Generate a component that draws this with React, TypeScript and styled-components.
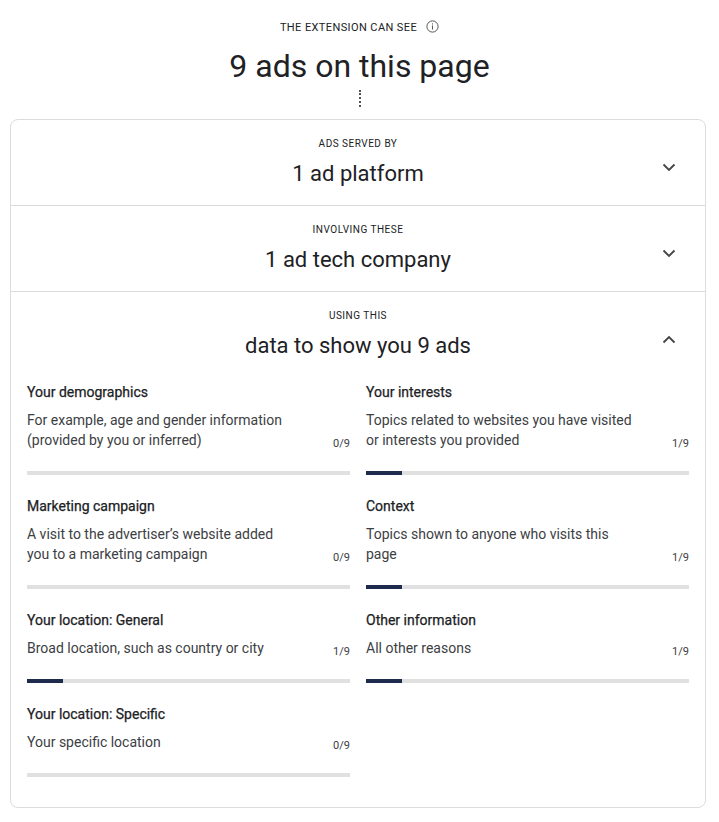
import React from 'react';
import styled, { createGlobalStyle } from 'styled-components';

const Global = createGlobalStyle`
  body { margin: 0; font-family: Roboto, "Liberation Sans", sans-serif; color: #202124; background: #fff; }
`;

type Item = { title: string; desc: string; count: number };

const items: Item[] = [
  { title: 'Your demographics', desc: 'For example, age and gender information (provided by you or inferred)', count: 0 },
  { title: 'Your interests', desc: 'Topics related to websites you have visited or interests you provided', count: 1 },
  { title: 'Marketing campaign', desc: 'A visit to the advertiser’s website added you to a marketing campaign', count: 0 },
  { title: 'Context', desc: 'Topics shown to anyone who visits this page', count: 1 },
  { title: 'Your location: General', desc: 'Broad location, such as country or city', count: 1 },
  { title: 'Other information', desc: 'All other reasons', count: 1 },
  { title: 'Your location: Specific', desc: 'Your specific location', count: 0 },
];

const Chevron = ({ up }: { up?: boolean }) => (
  <svg width="14" height="9" viewBox="0 0 14 9">
    <path d={up ? 'M1.5 7.5 L7 2 L12.5 7.5' : 'M1.5 1.5 L7 7 L12.5 1.5'} fill="none" stroke="#444" strokeWidth="1.8" />
  </svg>
);

const App = () => (
  <Page>
    <Global />
    <Head>
      <Eyebrow>
        THE EXTENSION CAN SEE
        <svg width="13" height="13" viewBox="0 0 13 13">
          <circle cx="6.5" cy="6.5" r="5.6" fill="none" stroke="#555" strokeWidth="1" />
          <rect x="6" y="5.5" width="1" height="4" fill="#555" />
          <rect x="6" y="3.4" width="1" height="1.1" fill="#555" />
        </svg>
      </Eyebrow>
      <BigTitle>9 ads on this page</BigTitle>
      <Dots />
    </Head>
    <Card>
      <Section>
        <SectionHead>
          <Label>ADS SERVED BY</Label>
          <SectionTitle>1 ad platform</SectionTitle>
          <Toggle><Chevron /></Toggle>
        </SectionHead>
      </Section>
      <Section>
        <SectionHead>
          <Label>INVOLVING THESE</Label>
          <SectionTitle>1 ad tech company</SectionTitle>
          <Toggle><Chevron /></Toggle>
        </SectionHead>
      </Section>
      <Section>
        <SectionHead>
          <Label>USING THIS</Label>
          <SectionTitle>data to show you 9 ads</SectionTitle>
          <Toggle><Chevron up /></Toggle>
        </SectionHead>
        <Grid>
          {items.map((it) => (
            <Cell key={it.title}>
              <CellTitle>{it.title}</CellTitle>
              <DescRow>
                <Desc>{it.desc}</Desc>
                <Count>{it.count}/9</Count>
              </DescRow>
              <Track>
                <Fill style={{ width: `${(it.count / 9) * 100}%` }} />
              </Track>
            </Cell>
          ))}
        </Grid>
      </Section>
    </Card>
  </Page>
);

const Page = styled.div`
  padding: 0 13px 14px 10px;
`;

const Head = styled.div`
  display: flex;
  flex-direction: column;
  align-items: center;
  padding-top: 20px;
  padding-left: 3px;
`;

const Eyebrow = styled.div`
  display: flex;
  align-items: center;
  gap: 9px;
  font-size: 11px;
  letter-spacing: 0.4px;
  color: #202124;
  line-height: 16px;
  svg { margin-top: -3px; }
`;

const BigTitle = styled.h1`
  margin: 10px 0 0;
  font-size: 32px;
  font-weight: 400;
  line-height: 40px;
`;

const Dots = styled.div`
  width: 0;
  height: 17px;
  margin: 4px 0 12px;
  border-left: 2px dotted #555;
`;

const Card = styled.div`
  border: 1px solid #dadce0;
  border-radius: 8px;
`;

const Section = styled.div`
  & + & { border-top: 1px solid #dadce0; }
`;

const SectionHead = styled.div`
  position: relative;
  display: flex;
  flex-direction: column;
  align-items: center;
  padding: 17px 0 17px;
`;

const Label = styled.div`
  font-size: 10px;
  letter-spacing: 0.5px;
  line-height: 14px;
`;

const SectionTitle = styled.div`
  margin-top: 9px;
  font-size: 22px;
  line-height: 28px;
`;

const Toggle = styled.div`
  position: absolute;
  right: 29px;
  top: 37px;
`;

const Grid = styled.div`
  display: grid;
  grid-template-columns: 1fr 1fr;
  column-gap: 16px;
  padding: 0 16px 9px;
  margin-top: 5px;
`;

const Cell = styled.div`
  display: flex;
  flex-direction: column;
  padding-bottom: 21px;
`;

const CellTitle = styled.div`
  font-size: 14px;
  font-weight: 400;
  line-height: 20px;
  color: #202124;
  -webkit-text-stroke: 0.25px #202124;
`;

const DescRow = styled.div`
  display: flex;
  align-items: flex-end;
  justify-content: space-between;
  margin-top: 8px;
  margin-bottom: 21px;
`;

const Desc = styled.div`
  max-width: 268px;
  font-size: 14px;
  line-height: 20px;
  color: #3c4043;
`;

const Count = styled.div`
  font-size: 11px;
  color: #3c4043;
  line-height: 16px;
  margin-bottom: -2px;
`;

const Track = styled.div`
  height: 4px;
  background: #e0e0e0;
`;

const Fill = styled.div`
  height: 100%;
  background: #1f2b4d;
`;

export default App;
